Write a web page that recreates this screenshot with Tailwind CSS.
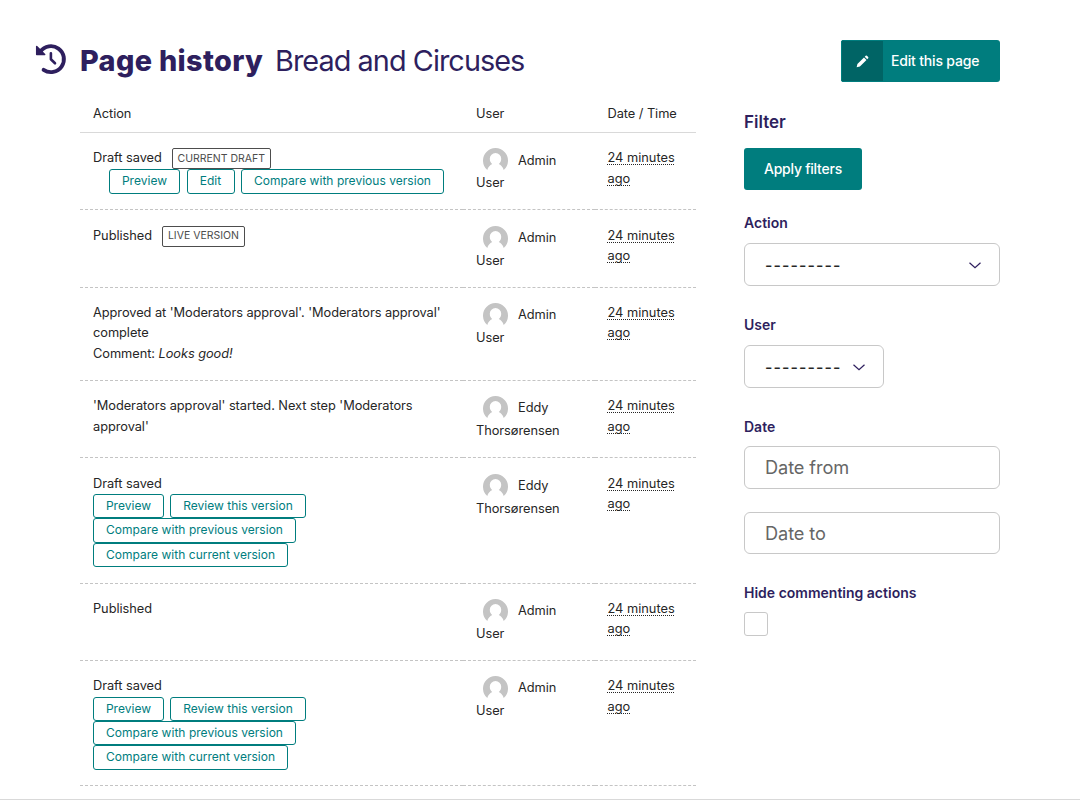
<!DOCTYPE html>
<html lang="en">
<head>
<meta charset="utf-8">
<title>Page history</title>
<script src="https://cdn.jsdelivr.net/npm/@tailwindcss/browser@4"></script>
</head>
<body class="bg-white font-[Inter,'Liberation_Sans',sans-serif] text-[#262626]">
<svg class="hidden">
  <symbol id="avatar" viewBox="0 0 25 25"><path fill="#c4c4c4" d="M4.3 22A12.5 12.5 0 1 1 20.7 22C20 19.3 18.2 17.2 15.8 16C17.3 14.9 18.2 13 18.2 10.700A5.7 5.700 0 0 0 6.800 10.700C6.800 13 7.700 14.900 9.200 16C6.800 17.200 5 19.300 4.300 22Z"/></symbol>
  <symbol id="chevron" viewBox="0 0 12 7"><path fill="none" stroke="#2e1f5e" stroke-width="1.2" d="M.5 .7L6 5.800L11.500 .7"/></symbol>
</svg>
<div class="flex h-[800px] flex-col overflow-hidden border-b border-[#d9d9d9]">
  <header class="flex h-[102px] shrink-0 items-start pr-20 pl-[35px] text-[#2e1f5e]">
    <svg class="mt-[43px] h-8 w-8 shrink-0" viewBox="0 0 32 32" fill="none" stroke="#2e1f5e" stroke-linecap="round" stroke-linejoin="round">
      <path stroke-width="3.900" d="M5.400 8.500A13 13 0 1 1 8.600 26.900"/>
      <path stroke-width="2.600" d="M15.900 10.300V16.300L20 20.300"/>
      <path fill="#2e1f5e" stroke-width="1.500" d="M1.700 3.500V11.500H9.700Z"/>
    </svg>
    <h1 class="mt-10 ml-[13px] flex items-baseline gap-3 text-[28.8px] leading-[42px] whitespace-nowrap"><span class="w-[183px] font-extrabold tracking-[0.35px]">Page history</span><span class="tracking-[-0.93px]">Bread and Circuses</span></h1>
    <a class="mt-10 ml-auto flex h-[42px] w-[159px] items-center overflow-hidden rounded-[3px] bg-[#007d7e] text-sm font-medium tracking-[-0.18px] text-white">
      <span class="flex h-full w-[43px] shrink-0 items-center justify-center border border-[#007d7e] bg-[#006465]"><svg class="h-[13px] w-[13px]" viewBox="0 0 14 14" fill="#fff"><path d="M.7 13.300L1.500 9.800L8.600 2.700L11.300 5.400L4.200 12.500ZM9.400 1.900L10.400 .9Q11.100 .3 11.800 .9L13.100 2.200Q13.700 2.900 13.100 3.600L12.100 4.600Z"/></svg></span>
      <span class="ml-[7px] whitespace-nowrap">Edit this page</span>
    </a>
  </header>
  <main class="flex pl-20">
    <section class="w-[616px] text-[12.8px] leading-[20.48px] tracking-[-0.05px]">
      <div class="grid h-[31px] grid-cols-[383px_131.5px_101.5px] border-b border-[#d9d9d9] *:pl-[13px] *:pt-[1.500px]">
        <div>Action</div><div>User</div><div>Date / Time</div>
      </div>
      <div id="rows"></div>
    </section>
    <aside class="ml-12 w-64 text-[14px] text-[#2e1f5e]">
      <h2 class="mt-[7px] text-[17px] leading-[26px] font-semibold">Filter</h2>
      <button class="mt-[13px] flex h-[42px] w-[118px] items-center justify-center rounded-[3px] bg-[#007d7e] pb-[2px] font-medium tracking-[-0.24px] text-white">Apply filters</button>
      <div class="mt-[23px] leading-5 font-semibold">Action</div>
      <div class="mt-[10px] flex h-[43px] items-center justify-between rounded-[6px] border border-[#c8c8c8] pr-[18px] pl-5 text-[16px] text-[#262626]"><span class="font-medium tracking-[1.1px]">---------</span><svg class="mt-px h-[7px] w-3"><use href="#chevron"/></svg></div>
      <div class="mt-[29px] leading-5 font-semibold">User</div>
      <div class="mt-[10px] flex h-[43px] w-[140px] items-center justify-between rounded-[6px] border border-[#c8c8c8] pr-[18px] pl-5 text-[16px] text-[#262626]"><span class="font-medium tracking-[1.1px]">---------</span><svg class="mt-px h-[7px] w-3"><use href="#chevron"/></svg></div>
      <div class="mt-[29px] leading-5 font-semibold">Date</div>
      <div class="mt-[9px] flex h-[43px] items-center rounded-[6px] border border-[#c8c8c8] pt-px pl-5 text-[18.2px] tracking-[-0.1px] text-[#666]">Date from</div>
      <div class="mt-[23px] flex h-[42px] items-center rounded-[6px] border border-[#c8c8c8] pt-px pl-5 text-[18.2px] tracking-[-0.1px] text-[#666]">Date to</div>
      <div class="mt-[29px] leading-5 font-semibold">Hide commenting actions</div>
      <div class="mt-[9px] h-6 w-6 rounded-[3px] border border-[#c8c8c8]"></div>
    </aside>
  </main>
</div>
<script>
const button = (label, width) => `<a class="flex h-[24.4px] items-center justify-center rounded-[3px] border border-[#007d7e] text-[12px] tracking-[0.03px] text-[#007d7e] whitespace-nowrap" style="width:${width}px">${label}</a>`;
const tag = (label, width) => `<span class="flex h-[21px] items-center justify-center rounded-[2px] border border-[#4d4d4d] pt-px text-[10.500px] tracking-normal text-[#4d4d4d] whitespace-nowrap" style="width:${width}px">${label}</span>`;
const titled = (title, badge) => `<div class="flex h-[20.480px] gap-[10px] whitespace-nowrap"><span>${title}</span>${badge}</div>`;
const draft = titled('Draft saved', '') + `<div class="flex flex-wrap gap-x-[6px]">${button('Preview', 71)}${button('Review this version', 136)}${button('Compare with previous version', 203)}<span class="w-full"></span>${button('Compare with current version', 195)}</div>`;
const rows = [
  [77.2, titled('Draft saved', tag('CURRENT DRAFT', 99)) + `<div class="ml-4 flex gap-[6.500px] *:h-[24.8px]">${button('Preview', 71)}${button('Edit', 48)}${button('Compare with previous version', 203)}</div>`, 'Admin', 'User'],
  [77.4, titled('Published', tag('LIVE VERSION', 83)), 'Admin', 'User'],
  [93.3, `Approved at 'Moderators approval'. 'Moderators approval'<br>complete<br>Comment: <em>Looks good!</em>`, 'Admin', 'User'],
  [77.3, `'Moderators approval' started. Next step 'Moderators<br>approval'`, 'Eddy', 'Thorsørensen'],
  [125.4, draft, 'Eddy', 'Thorsørensen'],
  [77.2, titled('Published', ''), 'Admin', 'User'],
  [125.2, draft, 'Admin', 'User'],
];
document.getElementById('rows').innerHTML = rows.map(([height, action, first, last]) => `
<div class="grid grid-cols-[383px_131.5px_101.5px] *:border-b *:border-dashed *:border-[#c4c4c4] *:pt-[15.36px] *:pl-[13px]" style="height:${height}px">
  <div class="whitespace-nowrap">${action}</div>
  <div><div class="flex h-[25px] items-center gap-[10px] pl-[7px]"><svg class="h-[25px] w-[25px]"><use href="#avatar"/></svg><span>${first}</span></div><div>${last}</div></div>
  <div><span class="tracking-normal underline decoration-dotted decoration-1 underline-offset-2 [text-decoration-skip-ink:none]">24 minutes<br>ago</span></div>
</div>`).join('');
</script>
</body>
</html>
